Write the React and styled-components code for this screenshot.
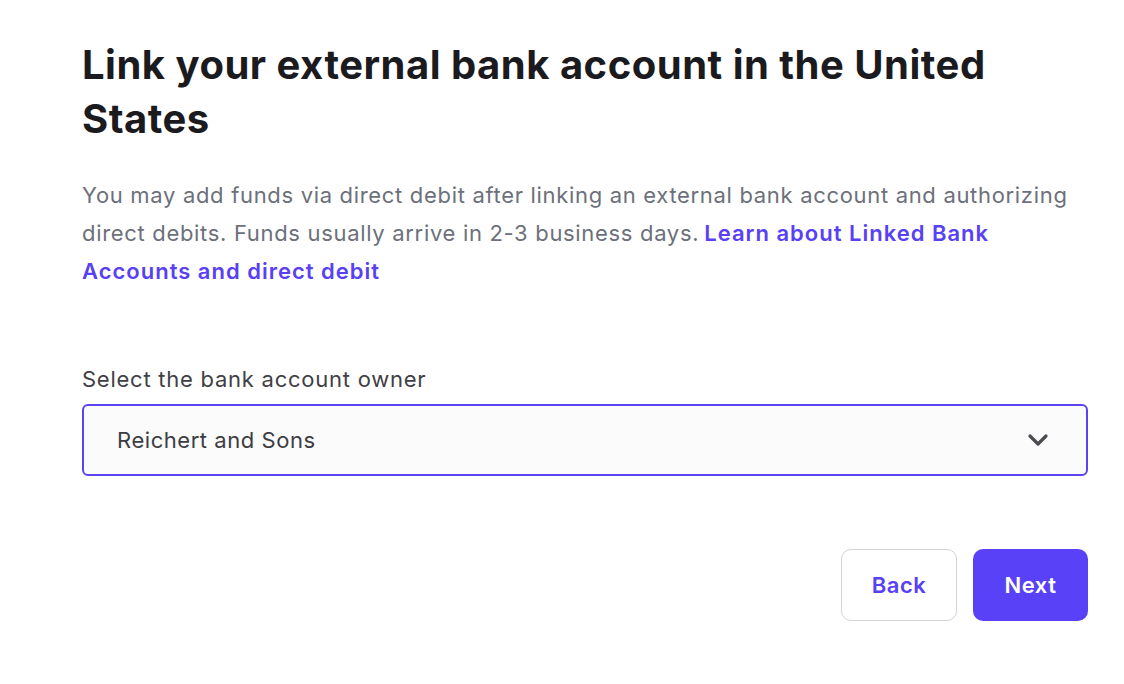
import React from 'react';
import styled, { createGlobalStyle } from 'styled-components';

const GlobalStyle = createGlobalStyle`
  body {
    margin: 0;
    background: #ffffff;
    font-family: "Inter", "Noto Sans", sans-serif;
  }
`;

const Page = styled.main`
  width: 1006px;
  padding: 38px 0 0 82px;
`;

const Title = styled.h1`
  margin: 0;
  font-size: 40px;
  line-height: 54px;
  font-weight: 700;
  letter-spacing: 0.5px;
  color: #1b1b1f;
`;

const Intro = styled.p`
  margin: 30px 0 0;
  font-size: 22px;
  line-height: 38px;
  letter-spacing: 0.68px;
  color: #6c707a;
  a {
    color: #5841f4;
    font-weight: 600;
    letter-spacing: 1px;
    text-decoration: none;
    margin-left: 5px;
  }
`;

const Field = styled.div`
  margin-top: 76px;
  display: flex;
  flex-direction: column;
  gap: 12px;
`;

const Label = styled.label`
  font-size: 22px;
  line-height: 26px;
  letter-spacing: 0.75px;
  color: #3f4045;
`;

const SelectBox = styled.div`
  height: 72px;
  box-sizing: border-box;
  display: flex;
  align-items: center;
  justify-content: space-between;
  padding: 0 37px 0 33px;
  border: 2px solid #5a44f2;
  border-radius: 6px;
  background: #fbfbfb;
  font-size: 22px;
  letter-spacing: 0.55px;
  color: #3c3d42;
`;

const Actions = styled.div`
  margin-top: 73px;
  display: flex;
  justify-content: flex-end;
  gap: 16px;
`;

const Button = styled.button`
  width: ${(p) => (p.primary ? '115px' : '116px')};
  height: 72px;
  border-radius: 10px;
  font-family: inherit;
  font-size: 22px;
  font-weight: 600;
  letter-spacing: 0.5px;
  cursor: pointer;
  border: ${(p) => (p.primary ? 'none' : '1.5px solid #d4d4d6')};
  background: ${(p) => (p.primary ? '#5841f6' : '#ffffff')};
  color: ${(p) => (p.primary ? '#ffffff' : '#5841f4')};
`;

const Chevron = () => (
  <svg width="22" height="14" viewBox="0 0 22 14" fill="none">
    <path d="M3 3l8 8 8-8" stroke="#4a4b50" strokeWidth="3.2" strokeLinecap="round" strokeLinejoin="round" />
  </svg>
);

export default function App() {
  return (
    <>
      <GlobalStyle />
      <Page>
        <Title>Link your external bank account in the United States</Title>
        <Intro>
          You may add funds via direct debit after linking an external bank account and authorizing
          direct debits. Funds usually arrive in 2-3 business days.
          <a href="#learn">Learn about Linked Bank Accounts and direct debit</a>
        </Intro>
        <Field>
          <Label htmlFor="owner">Select the bank account owner</Label>
          <SelectBox id="owner">
            <span>Reichert and Sons</span>
            <Chevron />
          </SelectBox>
        </Field>
        <Actions>
          <Button type="button">Back</Button>
          <Button type="button" primary>Next</Button>
        </Actions>
      </Page>
    </>
  );
}
